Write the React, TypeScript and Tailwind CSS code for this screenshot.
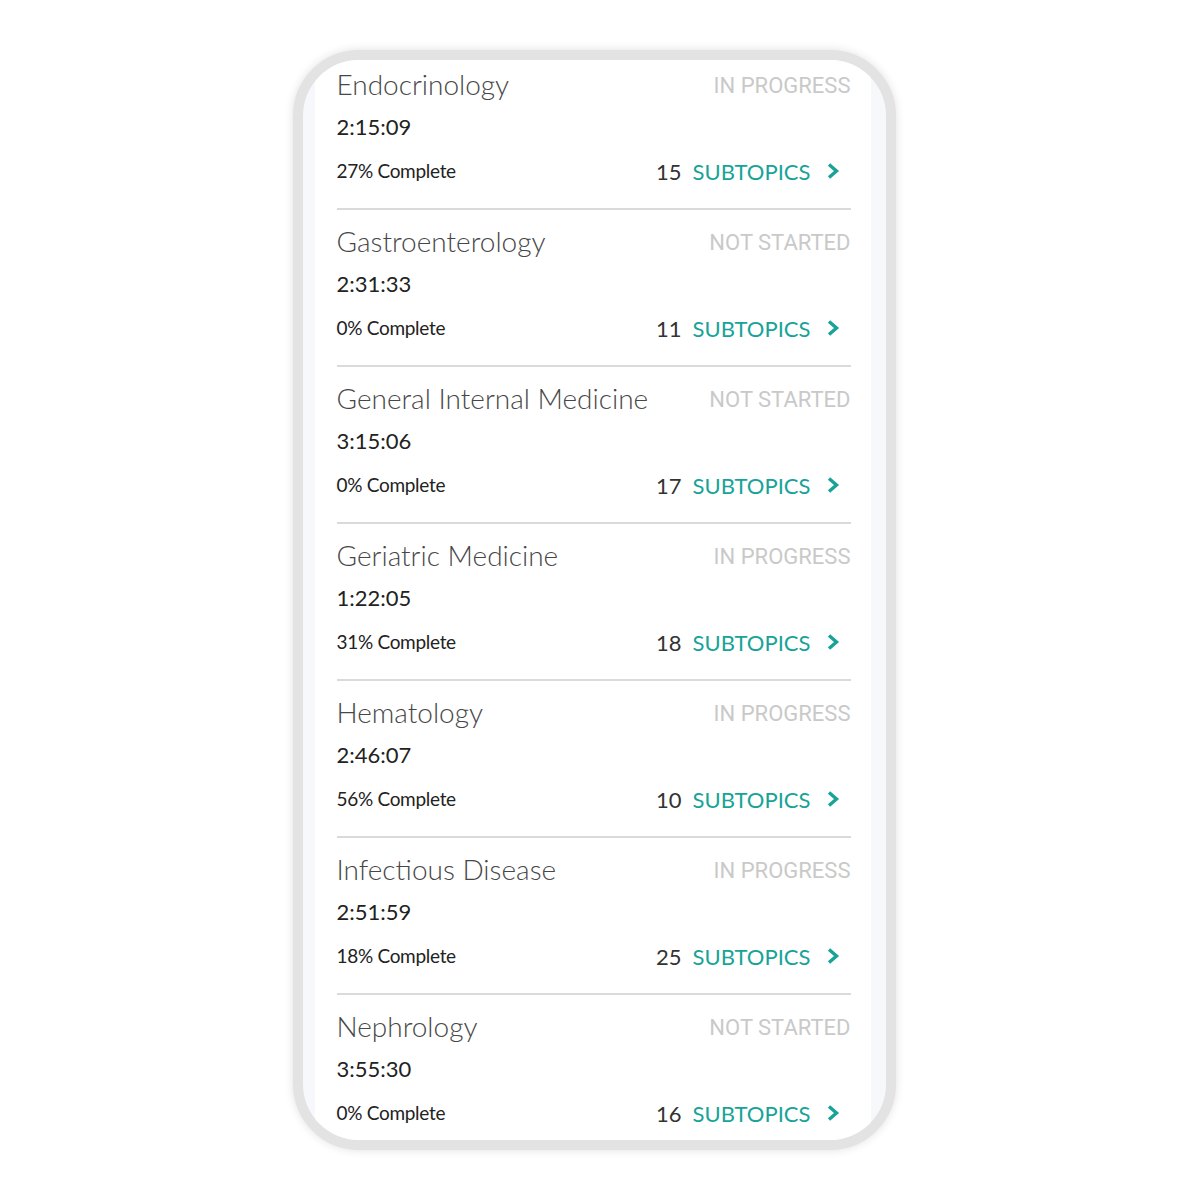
import React from "react";

type Item = { name: string; status: string; time: string; pct: number; subs: number };

const items: Item[] = [
  { name: "Endocrinology", status: "IN PROGRESS", time: "2:15:09", pct: 27, subs: 15 },
  { name: "Gastroenterology", status: "NOT STARTED", time: "2:31:33", pct: 0, subs: 11 },
  { name: "General Internal Medicine", status: "NOT STARTED", time: "3:15:06", pct: 0, subs: 17 },
  { name: "Geriatric Medicine", status: "IN PROGRESS", time: "1:22:05", pct: 31, subs: 18 },
  { name: "Hematology", status: "IN PROGRESS", time: "2:46:07", pct: 56, subs: 10 },
  { name: "Infectious Disease", status: "IN PROGRESS", time: "2:51:59", pct: 18, subs: 25 },
  { name: "Nephrology", status: "NOT STARTED", time: "3:55:30", pct: 0, subs: 16 },
];

function Chevron() {
  return (
    <svg width="14" height="18" viewBox="0 0 14 18" className="ml-[15px] mr-[11px]">
      <polyline points="3,2.5 10.5,9 3,15.5" fill="none" stroke="#17a398" strokeWidth="3.4" strokeLinecap="butt" strokeLinejoin="miter" />
    </svg>
  );
}

function Row({ item, last }: { item: Item; last: boolean }) {
  return (
    <div className={last ? "" : "border-b-2 border-[#dadada]"}>
      <div className="pt-[14px] pb-[23px]">
        <div className="flex items-center justify-between h-[34px]">
          <span className="text-[28px] font-light text-[#474747] leading-[34px] [font-family:Lato,sans-serif]">{item.name}</span>
          <span className="pt-[3px] text-[22px] text-[#c9c9c9] leading-[34px] [font-family:Roboto,sans-serif]">{item.status}</span>
        </div>
        <div className="mt-[13px] h-[26px] flex items-center text-[22px] text-[#222] leading-[26px] [font-family:Lato,sans-serif]">
          {item.time}
        </div>
        <div className="mt-[17px] h-[28px] flex items-center justify-between [font-family:Lato,sans-serif]">
          <span className="text-[19px] text-[#222] tracking-[-0.3px]">{item.pct}% Complete</span>
          <span className="flex items-center">
            <span className="text-[22px] text-[#333]">{item.subs}</span>
            <span className="text-[22px] text-[#17a398] ml-[11px]">SUBTOPICS</span>
            <Chevron />
          </span>
        </div>
      </div>
    </div>
  );
}

export default function App() {
  return (
    <div className="w-[1200px] h-[1200px] bg-white flex items-start justify-center pt-[50px]">
      <div className="ml-[-12px] w-[603px] h-[1100px] rounded-[66px] border-[10px] border-[#e3e3e3] shadow-[0_0_10px_rgba(0,0,0,0.12)] overflow-hidden bg-[#f7f8fb]">
        <div className="h-full ml-[12px] mr-[15px] bg-white overflow-hidden">
          <div className="mt-[-7px] pl-[22px] pr-[20px]">
            {items.map((it, i) => (
              <Row key={it.name} item={it} last={i === items.length - 1} />
            ))}
          </div>
        </div>
      </div>
    </div>
  );
}
